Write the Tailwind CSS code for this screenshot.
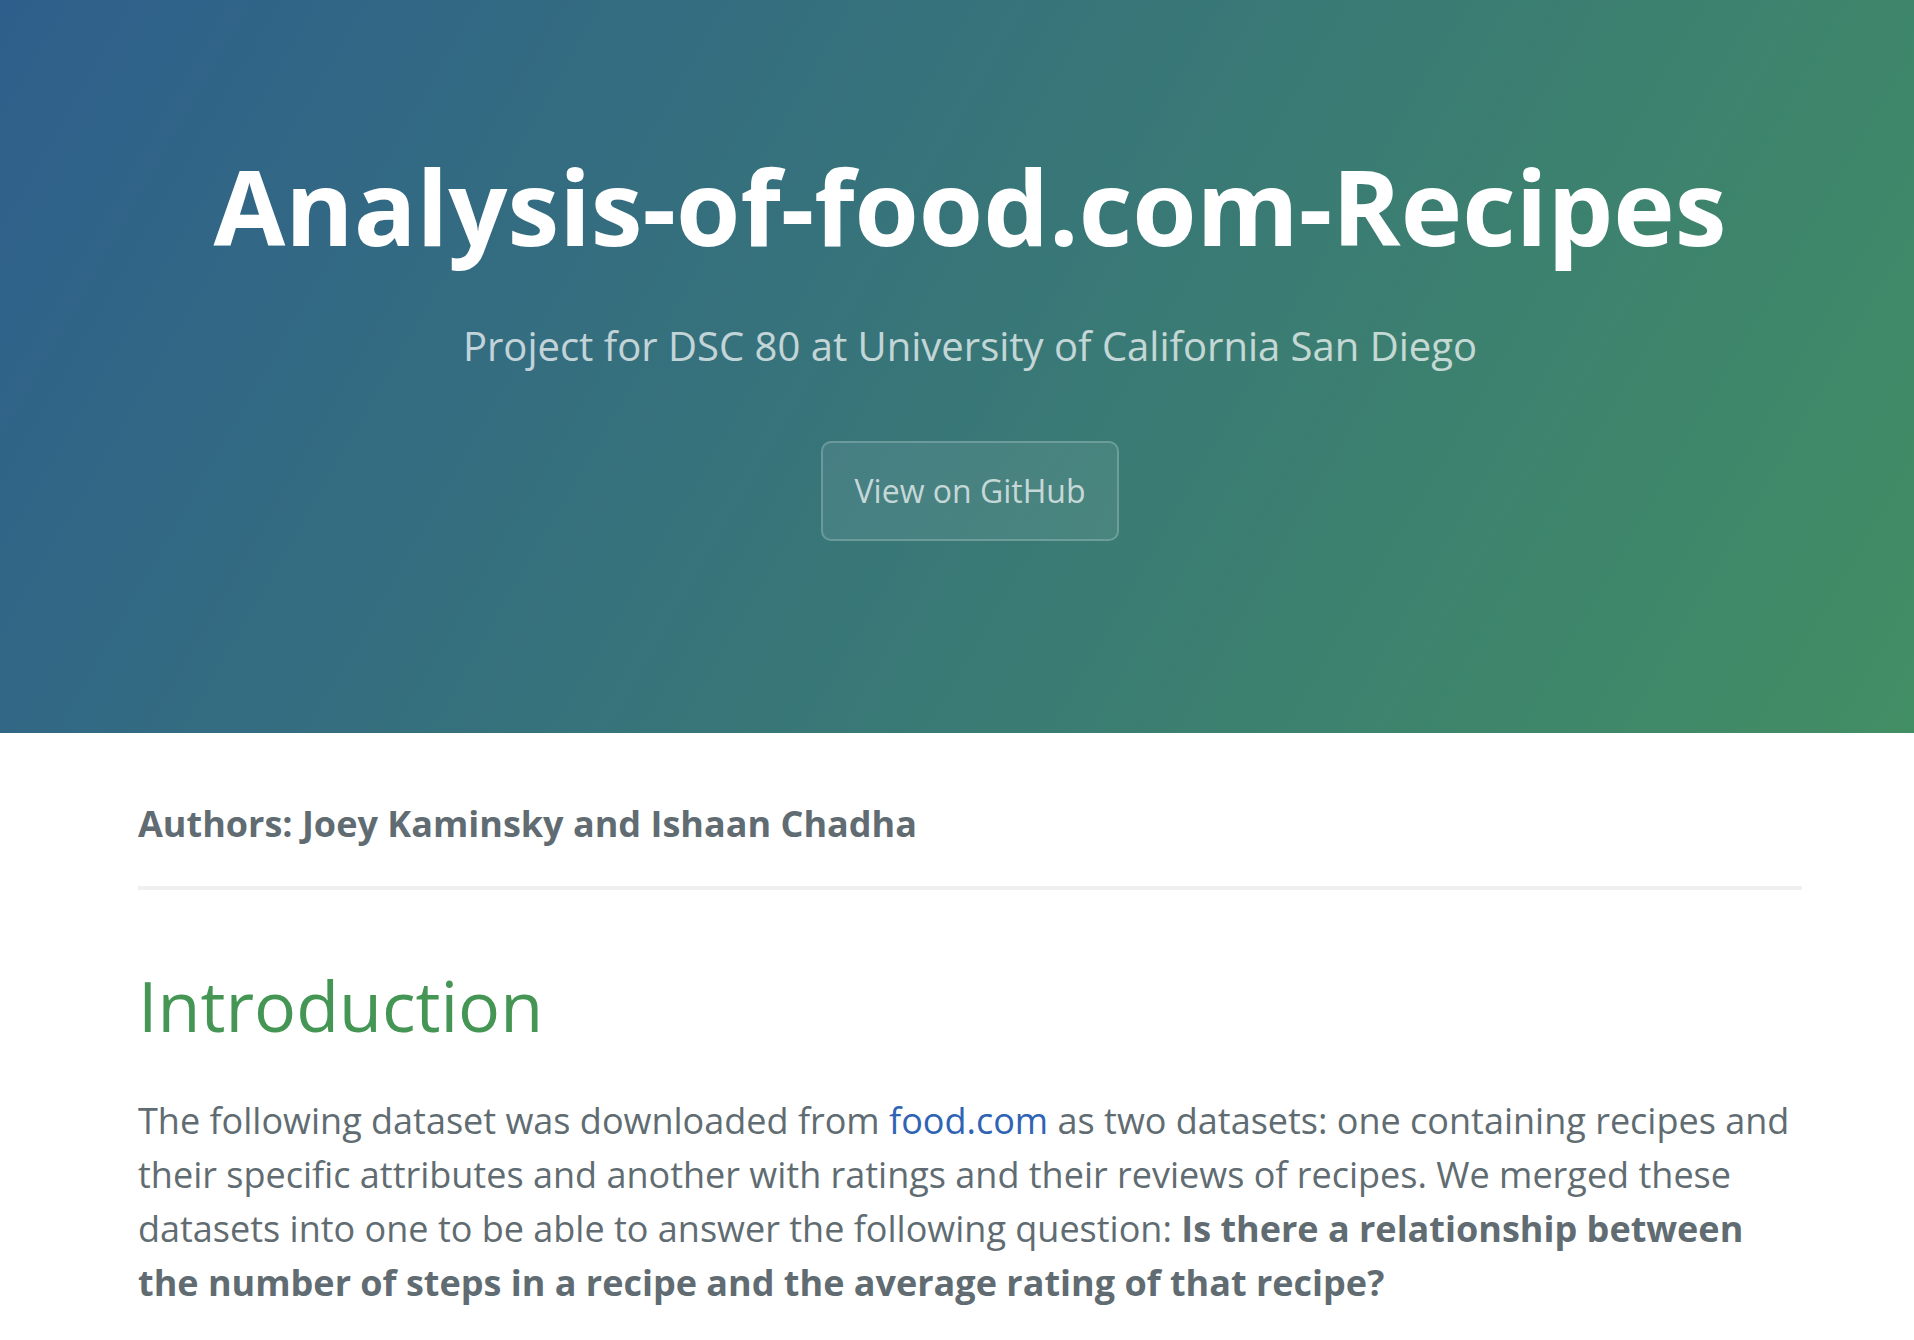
<!DOCTYPE html>
<html lang="en">
<head>
<meta charset="utf-8">
<meta name="viewport" content="width=device-width, initial-scale=1">
<title>Analysis-of-food.com-Recipes</title>
<script src="https://cdn.jsdelivr.net/npm/@tailwindcss/browser@4"></script>
</head>
<body class="bg-white font-['Open_Sans',sans-serif] text-[36px] leading-[54px] text-[#606c71]">
<header class="bg-[linear-gradient(120deg,#2e5f8c,#428e64)] pl-[26px] pt-[128px] pb-[192px] text-center text-white">
<h1 class="text-[104px] leading-[156px] font-bold">Analysis-of-food.com-Recipes</h1>
<p class="mt-[32px] text-[40px] leading-[60px] opacity-70">Project for DSC 80 at University of California San Diego</p>
<a href="#" class="mt-[65px] inline-block rounded-[10px] border-2 border-white/20 bg-white/8 px-[32px] py-[22px] text-[32px] leading-[52px] text-white/70">View on GitHub</a>
</header>
<main class="pl-[138px] pr-[112px] pt-[64px]">
<h3 class="font-bold">Authors: Joey Kaminsky and Ishaan Chadha</h3>
<hr class="mt-[35px] h-[4px] border-0 bg-[#eff0f1]">
<h1 class="mt-[62px] text-[70px] leading-[106px] text-[#459655]">Introduction</h1>
<p class="mt-[36px]">The following dataset was downloaded from <a href="#" class="text-[#2f63b4]">food.com</a> as two datasets: one containing recipes and their specific attributes and another with ratings and their reviews of recipes. We merged these datasets into one to be able to answer the following question: <strong class="font-bold">Is there a relationship between the number of steps in a recipe and the average rating of that recipe?</strong></p>
</main>
</body>
</html>
